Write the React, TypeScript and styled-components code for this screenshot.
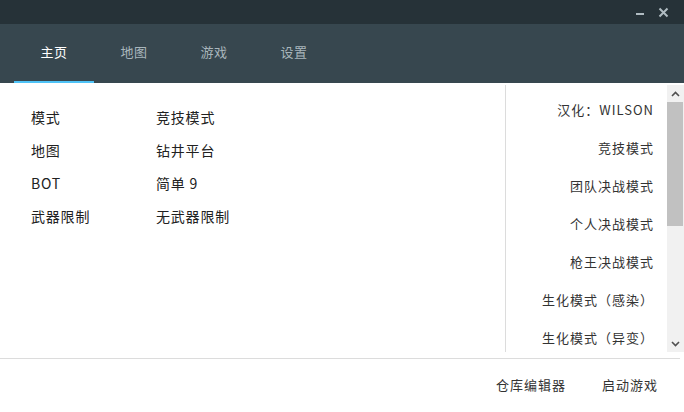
import React from "react"
import styled, { createGlobalStyle } from "styled-components"

const GlobalStyle = createGlobalStyle`
    html, body {
        margin: 0;
        padding: 0;
        background: #ffffff;
        font-family: "Noto Sans CJK SC", "Noto Sans", sans-serif;
    }
`

const tabs = ["主页", "地图", "游戏", "设置"]

const settings = [
    { label: "模式", value: "竞技模式" },
    { label: "地图", value: "钻井平台" },
    { label: "BOT", value: "简单 9" },
    { label: "武器限制", value: "无武器限制" },
]

const modes = [
    "汉化：WILSON",
    "竞技模式",
    "团队决战模式",
    "个人决战模式",
    "枪王决战模式",
    "生化模式（感染）",
    "生化模式（异变）",
]

export default function App() {
    return (
        <Window>
            <GlobalStyle />
            <TitleBar>
                <WinButton aria-label="minimize">
                    <svg width="10" height="10" viewBox="0 0 10 10">
                        <rect x="1" y="6" width="8" height="2" fill="#b0bcc2" />
                    </svg>
                </WinButton>
                <WinButton aria-label="close">
                    <svg width="11" height="11" viewBox="0 0 11 11">
                        <path
                            d="M1.5 1.5 L9.5 9.5 M9.5 1.5 L1.5 9.5"
                            stroke="#b0bcc2"
                            strokeWidth="2"
                        />
                    </svg>
                </WinButton>
            </TitleBar>
            <TabBar>
                {tabs.map((tab, i) => (
                    <Tab key={tab} $active={i === 0}>
                        {tab}
                    </Tab>
                ))}
            </TabBar>
            <Main>
                <InfoPanel>
                    {settings.map((row) => (
                        <InfoRow key={row.label}>
                            <InfoLabel>{row.label}</InfoLabel>
                            <InfoValue>{row.value}</InfoValue>
                        </InfoRow>
                    ))}
                </InfoPanel>
                <ModePanel>
                    <ModeList>
                        {modes.map((mode) => (
                            <ModeItem key={mode}>{mode}</ModeItem>
                        ))}
                    </ModeList>
                    <ScrollBar>
                        <ScrollButton>
                            <svg width="9" height="6" viewBox="0 0 9 6">
                                <path
                                    d="M1 5 L4.5 1.5 L8 5"
                                    fill="none"
                                    stroke="#505050"
                                    strokeWidth="1.6"
                                />
                            </svg>
                        </ScrollButton>
                        <ScrollTrack>
                            <ScrollThumb />
                        </ScrollTrack>
                        <ScrollButton>
                            <svg width="9" height="6" viewBox="0 0 9 6">
                                <path
                                    d="M1 1 L4.5 4.5 L8 1"
                                    fill="none"
                                    stroke="#505050"
                                    strokeWidth="1.6"
                                />
                            </svg>
                        </ScrollButton>
                    </ScrollBar>
                </ModePanel>
            </Main>
            <Footer>
                <FooterButton>仓库编辑器</FooterButton>
                <FooterButton>启动游戏</FooterButton>
            </Footer>
        </Window>
    )
}

const Window = styled.div`
    width: 684px;
    height: 412px;
    display: flex;
    flex-direction: column;
    overflow: hidden;
    background: #ffffff;
`

const TitleBar = styled.div`
    height: 24px;
    background-color: #263238;
    display: flex;
    justify-content: flex-end;
    align-items: center;
    gap: 9px;
    padding-right: 14px;
`

const WinButton = styled.div`
    width: 14px;
    height: 14px;
    display: flex;
    align-items: center;
    justify-content: center;
`

const TabBar = styled.div`
    height: 59px;
    background-color: #37474f;
    display: flex;
    padding-left: 14px;
`

const Tab = styled.div<{ $active?: boolean }>`
    width: 80px;
    display: flex;
    align-items: center;
    justify-content: center;
    padding-bottom: 2px;
    font-size: 13px;
    letter-spacing: 0.5px;
    color: ${(p) => (p.$active ? "#ffffff" : "#a9b6bc")};
    box-sizing: border-box;
    border-bottom: 2px solid ${(p) => (p.$active ? "#4fc3f7" : "transparent")};
`

const Main = styled.div`
    height: 276px;
    display: flex;
    padding: 2px 0 7px 0;
    box-sizing: border-box;
    border-bottom: 1px solid #dcdcdc;
    margin-right: 4px;
`

const InfoPanel = styled.div`
    flex: 1;
    padding: 15px 0 0 31px;
`

const InfoRow = styled.div`
    display: flex;
    height: 33px;
    align-items: center;
    font-size: 14px;
    letter-spacing: 0.8px;
    color: #212121;
`

const InfoLabel = styled.div`
    width: 125px;
`

const InfoValue = styled.div``

const ModePanel = styled.div`
    width: 179px;
    margin-right: -4px;
    height: 267px;
    border-left: 1px solid #dcdcdc;
    box-sizing: border-box;
    display: flex;
`

const ModeList = styled.div`
    flex: 1;
    overflow: hidden;
    padding-top: 5px;
`

const ModeItem = styled.div`
    height: 38px;
    display: flex;
    align-items: center;
    justify-content: flex-end;
    padding-right: 13px;
    font-size: 13px;
    letter-spacing: 1px;
    color: #333333;
    white-space: nowrap;
`

const ScrollBar = styled.div`
    width: 17px;
    display: flex;
    flex-direction: column;
    background: #f1f1f1;
`

const ScrollButton = styled.div`
    height: 17px;
    display: flex;
    align-items: center;
    justify-content: center;
`

const ScrollTrack = styled.div`
    flex: 1;
`

const ScrollThumb = styled.div`
    height: 124px;
    margin: 0 1px 0 0;
    background: #c1c1c1;
`

const Footer = styled.div`
    flex: 1;
    display: flex;
    justify-content: flex-end;
    align-items: center;
    gap: 36px;
    padding: 0 26px 2px 0;
`

const FooterButton = styled.div`
    font-size: 13px;
    letter-spacing: 1px;
    color: #333333;
`
